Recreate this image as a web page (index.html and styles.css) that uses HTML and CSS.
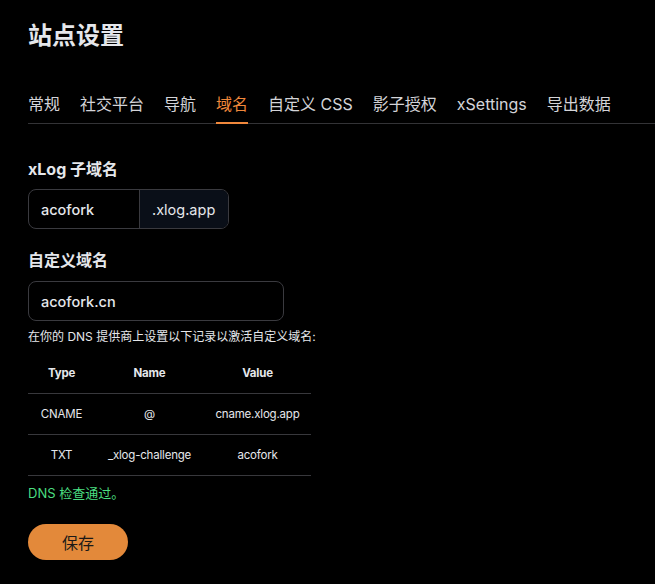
FILE: index.html
```html
<!DOCTYPE html>
<html lang="zh-CN">

<head>
  <meta charset="UTF-8">
  <meta name="viewport" content="width=device-width, initial-scale=1.0">
  <title>站点设置</title>
  <link rel="stylesheet" href="styles.css">
</head>

<body>
  <div class="settings">
    <h1 class="page-title">站点设置</h1>

    <nav class="tabs">
      <a class="tab">常规</a>
      <a class="tab">社交平台</a>
      <a class="tab">导航</a>
      <a class="tab active">域名</a>
      <a class="tab">自定义 CSS</a>
      <a class="tab">影子授权</a>
      <a class="tab">xSettings</a>
      <a class="tab">导出数据</a>
    </nav>

    <form class="domain-form">
      <label class="field-label">xLog 子域名</label>
      <div class="input-group">
        <input class="input input-sub" type="text" value="acofork">
        <span class="input-addon">.xlog.app</span>
      </div>

      <label class="field-label second">自定义域名</label>
      <input class="input input-custom" type="text" value="acofork.cn">

      <p class="help-text">在你的 DNS 提供商上设置以下记录以激活自定义域名:</p>

      <table class="dns-table">
        <thead>
          <tr>
            <th class="col-type">Type</th>
            <th class="col-name">Name</th>
            <th class="col-value">Value</th>
          </tr>
        </thead>
        <tbody>
          <tr>
            <td>CNAME</td>
            <td>@</td>
            <td>cname.xlog.app</td>
          </tr>
          <tr>
            <td>TXT</td>
            <td>_xlog-challenge</td>
            <td>acofork</td>
          </tr>
        </tbody>
      </table>

      <p class="dns-ok">DNS 检查通过。</p>

      <button class="save-button" type="button">保存</button>
    </form>
  </div>
</body>

</html>
```

FILE: styles.css
```css
:root {
  --background: #000000;
  --text: #e5e7eb;
  --text-tab: #d4d4d8;
  --border: #3a3a3f;
  --addon: #0a0f18;
  --accent: #f0883c;
  --button: #e3893a;
  --success: #4ade80;
}

* {
  box-sizing: border-box;
  margin: 0;
  padding: 0;
}

body {
  font-family: "Inter", "Noto Sans CJK SC", sans-serif;
  background: var(--background);
  color: var(--text);
}

.settings {
  padding: 20px 0 0 28px;
}

.page-title {
  font-size: 24px;
  line-height: 32px;
  font-weight: 700;
}

/* Tabs */
.tabs {
  display: flex;
  gap: 20px;
  margin-top: 34px;
  border-bottom: 1px solid #333336;
}

.tab {
  font-size: 16px;
  line-height: 24px;
  padding: 6px 0 6px;
  color: var(--text-tab);
  border-bottom: 2px solid transparent;
  margin-bottom: -1px;
  cursor: pointer;
}

.tab.active {
  color: var(--accent);
  border-bottom-color: var(--accent);
}

/* Form */
.domain-form {
  display: flex;
  flex-direction: column;
  align-items: flex-start;
  padding-top: 33px;
}

.field-label {
  font-size: 16px;
  line-height: 24px;
  font-weight: 700;
}

.field-label.second {
  margin-top: 19px;
}

.input-group {
  display: flex;
  margin-top: 8px;
  height: 40px;
  border: 1px solid var(--border);
  border-radius: 8px;
  overflow: hidden;
}

.input {
  font-family: inherit;
  font-size: 14.5px;
  font-weight: 500;
  color: var(--text);
  background: transparent;
  border: none;
  outline: none;
  padding: 0 12px;
}

.input-sub {
  width: 111px;
  border-right: 1px solid var(--border);
}

.input-addon {
  display: flex;
  align-items: center;
  padding: 0 13px 0 12px;
  font-size: 14.5px;
  background: var(--addon);
}

.input-custom {
  margin-top: 9px;
  width: 256px;
  height: 40px;
  border: 1px solid var(--border);
  border-radius: 8px;
}

.help-text {
  margin-top: 8px;
  font-size: 12px;
  line-height: 16px;
}

/* DNS records */
.dns-table {
  margin-top: 8px;
  width: 283px;
  border-collapse: collapse;
  font-size: 11.5px;
  text-align: center;
  letter-spacing: -0.2px;
}

.dns-table th,
.dns-table td {
  height: 41px;
  border-bottom: 1px solid #38383c;
  padding: 0;
}

.dns-table th {
  height: 40px;
  font-weight: 700;
}

.col-type {
  width: 67px;
}

.col-name {
  width: 109px;
}

.dns-ok {
  margin-top: 7px;
  font-size: 13px;
  line-height: 20px;
  color: var(--success);
}

.save-button {
  margin-top: 21px;
  width: 100px;
  height: 36px;
  border: none;
  border-radius: 18px;
  background: var(--button);
  color: #1c1917;
  font-family: inherit;
  font-size: 16px;
  cursor: pointer;
}
```
